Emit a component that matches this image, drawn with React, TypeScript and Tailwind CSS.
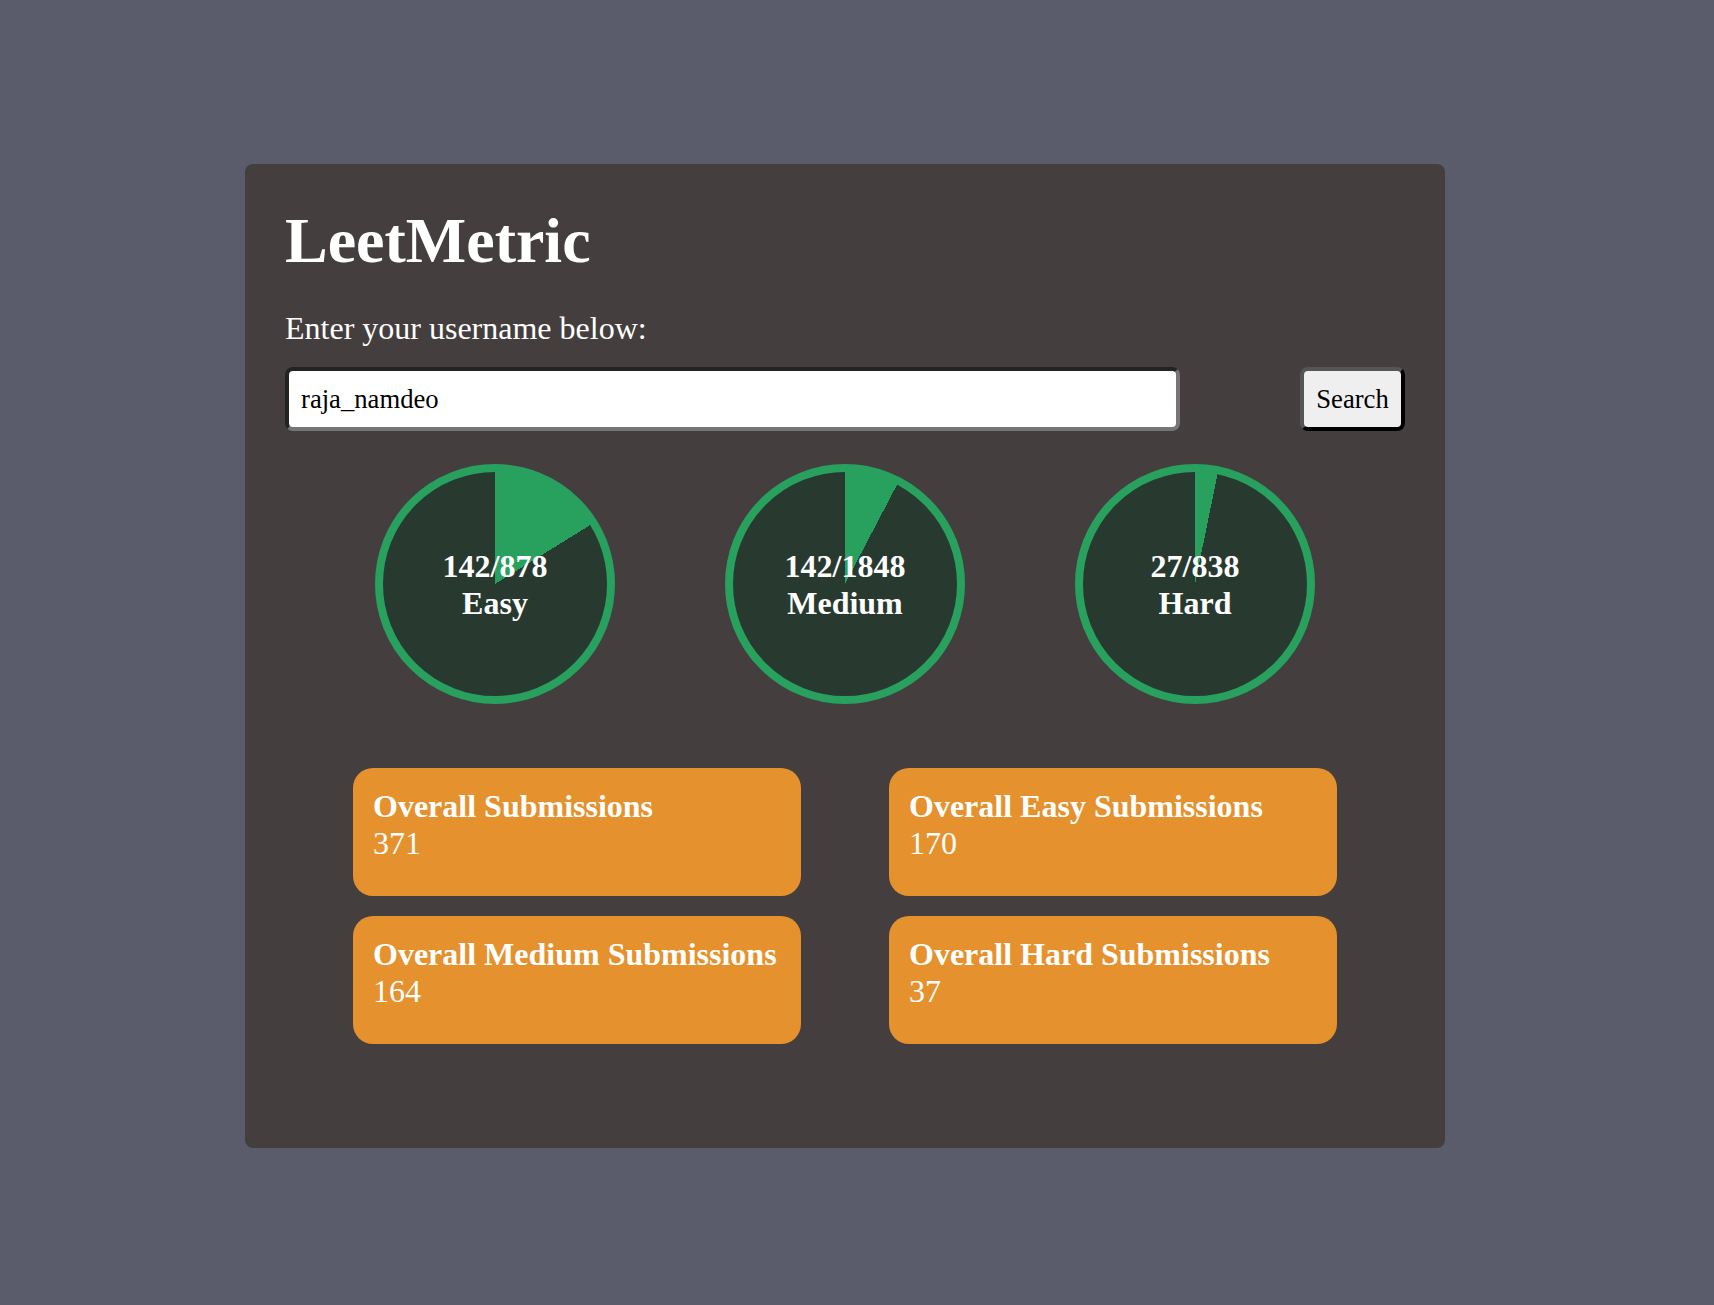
import React from 'react';

const stats = [
  { label: 'Easy', solved: 142, total: 878 },
  { label: 'Medium', solved: 142, total: 1848 },
  { label: 'Hard', solved: 27, total: 838 },
];

const cards = [
  { title: 'Overall Submissions', value: 371 },
  { title: 'Overall Easy Submissions', value: 170 },
  { title: 'Overall Medium Submissions', value: 164 },
  { title: 'Overall Hard Submissions', value: 37 },
];

const ProgressCircle: React.FC<{ label: string; solved: number; total: number }> = ({ label, solved, total }) => {
  const deg = (solved / total) * 360;
  return (
    <div
      className="w-[240px] h-[240px] rounded-full border-[8px] border-[#28a05e] flex flex-col items-center justify-center pt-[2px] text-white font-bold text-[32px] leading-[37px]"
      style={{ background: `conic-gradient(#28a05e ${deg}deg, #283a30 0)` }}
    >
      <span>{solved}/{total}</span>
      <span>{label}</span>
    </div>
  );
};

const App: React.FC = () => {
  return (
    <div className="min-h-screen bg-[#5b5c6b] pt-[164px] pb-[157px] pl-[245px] font-['Liberation_Serif',serif]">
      <div className="w-[1200px] h-[984px] rounded-lg bg-[#443f3e] px-[40px] pt-[41px] text-white">
        <h1 className="text-[64px] font-bold leading-[71px]">LeetMetric</h1>
        <p className="mt-[34px] text-[32px] leading-[37px]">Enter your username below:</p>

        <div className="mt-[20px] flex items-center justify-between">
          <input
            type="text"
            defaultValue="raja_namdeo"
            className="w-[895px] h-[64px] rounded-lg border-4 border-t-[#232323] border-l-[#232323] border-b-[#767676] border-r-[#767676] bg-white px-[12px] text-[26.67px] text-black outline-none"
          />
          <button className="w-[105px] h-[64px] rounded-lg border-4 border-t-[#555555] border-l-[#555555] border-b-black border-r-black bg-[#efefef] text-[26.67px] text-black">
            Search
          </button>
        </div>

        <div className="mt-[33px] flex justify-center gap-[110px]">
          {stats.map((s) => (
            <ProgressCircle key={s.label} {...s} />
          ))}
        </div>

        <div className="mt-[64px] grid grid-cols-[448px_448px] justify-center gap-x-[88px] gap-y-[20px]">
          {cards.map((c) => (
            <div key={c.title} className="h-[128px] rounded-[20px] bg-[#e5912d] px-[20px] pt-[20px] text-[32px] leading-[37px]">
              <div className="font-bold">{c.title}</div>
              <div>{c.value}</div>
            </div>
          ))}
        </div>
      </div>
    </div>
  );
};

export default App;
